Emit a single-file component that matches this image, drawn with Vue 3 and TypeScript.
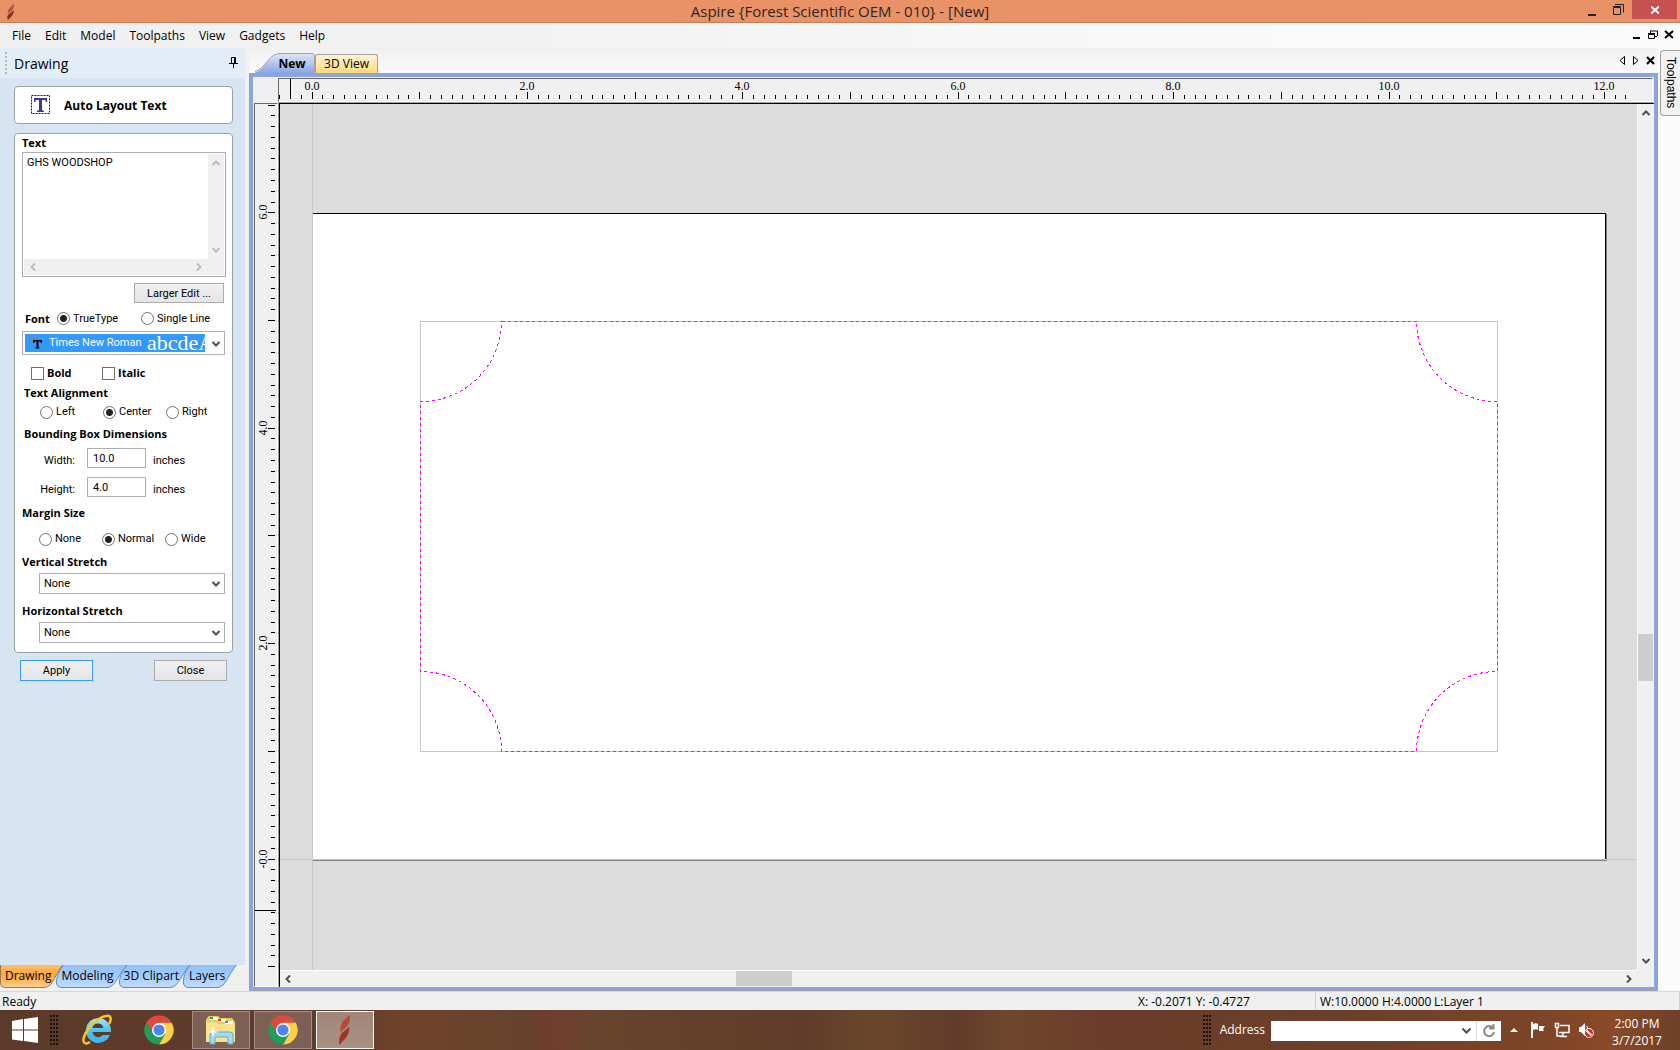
<script setup lang="ts">
import { ref } from 'vue'

interface Tick {
  pos: number
  major: boolean
  label: string
}

const menus = ['File', 'Edit', 'Model', 'Toolpaths', 'View', 'Gadgets', 'Help']
const panelTabs = ['Drawing', 'Modeling', '3D Clipart', 'Layers']
const taskApps = ['chrome', 'files running', 'chrome running', 'aspire running active']

const engraving = ref('GHS WOODSHOP')
const fontKind = ref('TrueType')
const bold = ref(false)
const italic = ref(false)
const alignment = ref('Center')
const margin = ref('Normal')
const boxWidth = ref('10.0')
const boxHeight = ref('4.0')
const address = ref('')

// Screen pixels per inch of material
const INCH = 107.7

function ticks(from: number, to: number, origin: number, dir: number): Tick[] {
  const list: Tick[] = []
  for (let i = from; i <= to; i++) {
    const inches = i / 10
    const even = i % 20 === 0
    list.push({
      pos: Math.floor(origin + dir * inches * INCH),
      major: i % 10 === 0,
      label: even ? inches.toFixed(1) : '',
    })
  }
  return list
}

const hTicks = ticks(-3, 122, 34, 1)
const vTicks = ticks(-10, 70, 757, -1).map((t) => (t.label === '0.0' ? { ...t, label: '-0.0' } : t))

const outline =
  'M221.5 217.5H1136.5A80.5 80.5 0 0 0 1217.5 297.5V567.5A80.5 80.5 0 0 0 1136.5 647.5H221.5A80.5 80.5 0 0 0 140.5 567.5V297.5A80.5 80.5 0 0 0 221.5 217.5Z'
</script>

<template>
  <div class="app">
    <header class="titlebar">
      <svg class="app-icon" width="10" height="18" viewBox="0 0 10 18" aria-hidden="true">
        <path d="M8 1C4 4 1 7 2 11l4-4C8 5 8 3 8 1z" fill="#b4523c" />
        <path d="M8 7L2 12C1 14 1 15 2 17c3-3 6-6 6-10z" fill="#7d2f22" />
      </svg>
      <h1>Aspire {Forest Scientific OEM - 010} - [New]</h1>
      <div class="win-controls">
        <button aria-label="Minimize"><svg width="10" height="12"><path d="M1 10h8v2h-8z" fill="#222" /></svg></button>
        <button aria-label="Restore">
          <svg width="12" height="12" fill="none" stroke="#222"><path d="M1.5 3.5h7v7h-7zM1 2.5h8M3 .5h8.500v8" /></svg>
        </button>
        <button class="close" aria-label="Close">
          <svg width="8" height="8" stroke="#fff" stroke-width="2"><path d="M0 .5l8 7M8 .5l-8 7" /></svg>
        </button>
      </div>
    </header>

    <nav class="menubar">
      <button v-for="m in menus" :key="m">{{ m }}</button>
      <div class="mdi">
        <button aria-label="Minimize document"><svg width="10" height="10"><path d="M1 7h7v2h-7z" /></svg></button>
        <button aria-label="Restore document">
          <svg width="10" height="10" fill="none" stroke="#000"><path d="M.5 4.500h6v4h-6zM0 3.500h7M3 1h6.500v5M2.500 3V.5M9 6.500H7" /></svg>
        </button>
        <button aria-label="Close document">
          <svg width="10" height="10" stroke="#000" stroke-width="2"><path d="M1 1l8 7M9 1l-8 7" /></svg>
        </button>
      </div>
    </nav>

    <main class="workspace">
      <aside class="panel">
        <div class="panel-head">
          <i class="grip"></i>
          <h2>Drawing</h2>
          <svg width="9" height="11" fill="none" stroke="#000" aria-label="Pin"><path d="M2.500 6V.5h4V6M5.500 0v6M0 6.500h9M4.500 6v5" /></svg>
        </div>

        <div class="panel-body">
          <section class="card tool">
            <svg width="20" height="20" viewBox="0 0 20 20" aria-hidden="true">
              <rect x=".5" y=".5" width="18" height="18" fill="#fff" stroke="#15183f" stroke-dasharray="2 1" />
              <path d="M3 3h13v4h-1l-1-2h-3v10l2 1v1H6v-1l2-1V5H5L4 7H3z" fill="#3a3a9c" />
            </svg>
            <h3>Auto Layout Text</h3>
          </section>

          <form class="card form" @submit.prevent>
            <label class="b" for="txt">Text</label>
            <div class="memo">
              <textarea id="txt" v-model="engraving" wrap="off"></textarea>
              <div class="mv">
                <svg width="8" height="7"><path d="M.5 6L4 2.500 7.500 6" class="dim" /></svg>
                <svg width="8" height="7"><path d="M.5 1L4 4.500 7.500 1" class="dim" /></svg>
              </div>
              <div class="mh">
                <svg width="7" height="8"><path d="M6 .5L2.500 4 6 7.500" class="dim" /></svg>
                <svg width="7" height="8"><path d="M1 .5L4.500 4 1 7.500" class="dim" /></svg>
              </div>
              <div class="mc"></div>
            </div>
            <button type="button" class="btn larger">Larger Edit ...</button>

            <div class="row font-row">
              <span class="b">Font</span>
              <label><input v-model="fontKind" type="radio" name="fk" value="TrueType" />TrueType</label>
              <label><input v-model="fontKind" type="radio" name="fk" value="Single Line" />Single Line</label>
            </div>

            <div class="font-box">
              <div class="font-sel">
                <svg width="12" height="12" viewBox="0 0 12 12" aria-hidden="true">
                  <path d="M0 0h8v3H7L6 1.500H5V7H3V1.500H2L1 3H0z" fill="#8a8078" />
                  <path d="M3 3h9v3h-1l-1-1.500H8.500V10l1 .5v1h-4v-1l1-.5V4.500H5L4 6H3z" fill="#000" />
                </svg>
                <select aria-label="Font name"><option>Times New Roman</option></select>
                <span class="sample">abcdeA</span>
              </div>
              <svg class="drop" width="8" height="7"><path d="M.5 1L4 4.500 7.500 1" /></svg>
            </div>

            <div class="row checks">
              <label class="b"><input v-model="bold" type="checkbox" />Bold</label>
              <label class="b"><input v-model="italic" type="checkbox" />Italic</label>
            </div>

            <h4 class="in">Text Alignment</h4>
            <div class="row radios align">
              <label v-for="a in ['Left', 'Center', 'Right']" :key="a">
                <input v-model="alignment" type="radio" name="al" :value="a" />{{ a }}
              </label>
            </div>

            <h4 class="in">Bounding Box Dimensions</h4>
            <div class="row dim-row first">
              <label for="bw">Width:</label><input id="bw" v-model="boxWidth" type="text" /><span>inches</span>
            </div>
            <div class="row dim-row">
              <label for="bh">Height:</label><input id="bh" v-model="boxHeight" type="text" /><span>inches</span>
            </div>

            <h4 class="ms">Margin Size</h4>
            <div class="row radios margins">
              <label v-for="m in ['None', 'Normal', 'Wide']" :key="m">
                <input v-model="margin" type="radio" name="mg" :value="m" />{{ m }}
              </label>
            </div>

            <label class="b stretch" for="vs">Vertical Stretch</label>
            <div class="combo">
              <select id="vs"><option>None</option></select>
              <svg class="drop" width="8" height="7"><path d="M.5 1L4 4.500 7.500 1" /></svg>
            </div>
            <label class="b stretch" for="hs">Horizontal Stretch</label>
            <div class="combo">
              <select id="hs"><option>None</option></select>
              <svg class="drop" width="8" height="7"><path d="M.5 1L4 4.500 7.500 1" /></svg>
            </div>
          </form>

          <div class="actions">
            <button class="btn primary">Apply</button>
            <button class="btn">Close</button>
          </div>
        </div>

        <nav class="panel-tabs">
          <svg class="tab-shapes" width="245" height="24" aria-hidden="true">
            <defs>
              <linearGradient id="tb" x1="0" y1="0" x2="0" y2="1">
                <stop offset="0" stop-color="#8fc0fb" /><stop offset=".45" stop-color="#a3cbfb" /><stop offset="1" stop-color="#bfdcff" />
              </linearGradient>
              <linearGradient id="to" x1="0" y1="0" x2="0" y2="1">
                <stop offset="0" stop-color="#ffc16f" /><stop offset=".45" stop-color="#ffa63a" /><stop offset="1" stop-color="#ffd090" />
              </linearGradient>
            </defs>
            <g fill="url(#tb)" stroke="#5d8ac9">
              <path d="M191 -1C186 4 183 12 183.500 18Q184 22.500 189 22.500H217C226 22.500 228 9 237 -.5" />
              <path d="M128 -1C123 4 119 12 119.500 18Q120 22.500 125 22.500H170C179 22.500 182 7 191 -1" />
              <path d="M64 -1C60 4 56 12 56.500 18Q57 22.500 62 22.500H107C116 22.500 119 7 128 -1" />
            </g>
            <path d="M.5 -1V19Q1 22.500 5 22.500H44C54 22.500 55 7 64 -1" fill="url(#to)" stroke="#9c7a4c" />
          </svg>
          <button v-for="t in panelTabs" :key="t">{{ t }}</button>
        </nav>
      </aside>

      <section class="doc">
        <div class="doc-tabs">
          <button class="tab-new">
            <svg width="62" height="20" aria-hidden="true">
              <defs>
                <linearGradient id="tn" x1="0" y1="0" x2="0" y2="1">
                  <stop offset="0" stop-color="#dfe8f8" /><stop offset="1" stop-color="#8ba5e3" />
                </linearGradient>
              </defs>
              <path d="M0 19.500C9 18 14 .5 25 .5H57Q59.500 .5 59.500 3V20H0z" fill="url(#tn)" />
              <path d="M0 18.500C9 17 14 .5 25 .5H57Q59.500 .5 59.500 3V19" fill="none" stroke="#a0a0a0" />
            </svg>
            <span>New</span>
          </button>
          <button class="tab-3d">3D View</button>
          <div class="doc-nav">
            <button aria-label="Previous tab"><svg width="6" height="10" fill="none" stroke="#000"><path d="M5.500 .5v8L1 4.500z" /></svg></button>
            <button aria-label="Next tab"><svg width="6" height="10" fill="none" stroke="#000"><path d="M.5 .5v8L5 4.500z" /></svg></button>
            <button aria-label="Close tab"><svg width="9" height="9" stroke="#000" stroke-width="2"><path d="M1 1l7 7M8 1l-7 7" /></svg></button>
          </div>
        </div>

        <div class="frame">
          <div class="corner"></div>
          <div class="hruler">
            <svg width="100%" height="23" shape-rendering="crispEdges">
              <rect v-for="t in hTicks" :key="t.pos" :x="t.pos" :y="t.major ? 14 : 17" width="1" :height="t.major ? 7 : 4" />
              <rect x="12" y="1" width="1" height="16" />
              <template v-for="t in hTicks" :key="'l' + t.pos">
                <text v-if="t.label" :x="t.pos" y="12" text-anchor="middle">{{ t.label }}</text>
              </template>
            </svg>
          </div>
          <div class="vruler">
            <svg width="24" height="100%" shape-rendering="crispEdges">
              <rect v-for="t in vTicks" :key="t.pos" :x="t.major ? 14 : 17" :y="t.pos - 1" :width="t.major ? 7 : 4" height="1" />
              <rect x="1" y="807" width="21" height="1" />
              <template v-for="t in vTicks" :key="'l' + t.pos">
                <text
                  v-if="t.label"
                  text-anchor="middle"
                  :transform="`translate(13 ${t.pos - 1}) rotate(-90)`"
                >{{ t.label }}</text>
              </template>
            </svg>
          </div>
          <div class="view">
            <div class="canvas">
              <svg width="100%" height="100%">
                <g shape-rendering="crispEdges">
                  <rect x="32" y="0" width="1" height="100%" fill="#c6c6c6" />
                  <rect x="33" y="109" width="1293" height="646" fill="#fff" />
                  <rect x="33" y="109" width="1293" height="1" />
                  <rect x="1325" y="109" width="1" height="646" />
                  <rect x="1326" y="110" width="1" height="647" fill="#808080" />
                  <rect x="0" y="755" width="100%" height="1" fill="#c6c6c6" />
                  <rect x="33" y="756" width="1294" height="1" fill="#808080" />
                  <rect x="140.5" y="217.5" width="1077" height="430" fill="none" stroke="#c6c6c6" />
                </g>
                <path :d="outline" fill="none" stroke="#f0f" stroke-dasharray="3 3" shape-rendering="crispEdges" />
              </svg>
            </div>
            <div class="vscroll">
              <svg width="8" height="7"><path d="M.5 6L4 2.500 7.500 6" /></svg>
              <i class="before"></i><i class="thumb"></i><i class="after"></i>
              <svg width="8" height="7"><path d="M.5 1L4 4.500 7.500 1" /></svg>
            </div>
            <div class="hscroll">
              <svg width="7" height="8"><path d="M6 .5L2.500 4 6 7.500" /></svg>
              <i class="before"></i><i class="thumb"></i><i class="after"></i>
              <svg width="7" height="8"><path d="M1 .5L4.500 4 1 7.500" /></svg>
            </div>
            <div class="sizer"></div>
          </div>
        </div>
      </section>

      <aside class="dock"><button>Toolpaths</button></aside>
    </main>

    <footer class="status">
      <span class="ready">Ready</span>
      <span class="pos">X: -0.2071 Y: -0.4727</span>
      <span class="size"><span>W:10.0000</span><span>H:4.0000</span><span>L:Layer 1</span></span>
    </footer>

    <div class="taskbar">
      <button class="start" aria-label="Start">
        <svg width="26" height="26" viewBox="0 0 26 26" fill="#fff">
          <path d="M0 4l11-2v10.500H0zM12 2l14-2v12.500H12zM0 13.500h11V24L0 22.500zM12 13.500h14V26l-14-2z" />
        </svg>
      </button>
      <i class="dots"></i>
      <button class="ie" aria-label="Internet Explorer">
        <svg width="32" height="32" viewBox="0 0 32 32">
          <defs>
            <linearGradient id="ieg" x1="0" y1="0" x2="0" y2="1"><stop offset="0" stop-color="#a8ecff" /><stop offset=".5" stop-color="#49c3f2" /><stop offset="1" stop-color="#3fb2ea" /></linearGradient>
          </defs>
          <path d="M17 4a12.500 12.500 0 1 0 12 17h-7a6 6 0 0 1-10.500-3H30A13 13 0 0 0 17 4zm-5.500 10a5.500 5.500 0 0 1 10.800 0z" fill="url(#ieg)" fill-rule="evenodd" />
          <path d="M28 10C31 5 30 1 25 2 17 3 6 14 3 23c-2 6 1 8 6 5" fill="none" stroke="#f6c727" stroke-width="2.500" />
        </svg>
      </button>
      <button v-for="a in taskApps" :key="a" :class="['task', a]" :aria-label="a.split(' ')[0]">
        <svg v-if="a.startsWith('chrome')" width="30" height="30" viewBox="-15 -15 30 30">
          <path d="M-12.700 -7.300A14.600 14.600 0 0 1 12.700 -7.300L0 -7.300L-6.300 3.600z" fill="#dd4b3e" />
          <path d="M12.700 -7.300A14.600 14.600 0 0 1 0 14.600L6.300 3.600L0 -7.300z" fill="#fdd04a" />
          <path d="M0 14.600A14.600 14.600 0 0 1 -12.700 -7.300L-6.300 3.600L6.300 3.600z" fill="#1f9e5a" />
          <circle r="7" fill="#fff" /><circle r="5.600" fill="#4a86ee" />
        </svg>
        <svg v-else-if="a.startsWith('files')" width="32" height="30" viewBox="0 0 32 30">
          <path d="M2 3l2-2h9l2 2h12l3 4v20H1V5z" fill="#eccb63" />
          <path d="M5 2h8v3H5zM13 4h8v3h-8zM20 6h8v3h-8z" fill="#fff" />
          <path d="M5 2h3v2H5z" fill="#18a048" /><path d="M13 4h3v2h-3z" fill="#d63a2a" /><path d="M20 6h3v2h-3z" fill="#2e90e0" />
          <path d="M1 7h10l2 2h17v18H1z" fill="#f8e38d" />
          <path d="M5 29v-9q0-3 3-3h17q3 0 3 3v9h-5v-5q0-2-2-2h-9q-2 0-2 2v5z" fill="#a4d8ee" stroke="#63a9cc" />
          <path d="M8 11l1 5 5 1-5 1-1 5-1-5-5-1 5-1z" fill="#fff" />
        </svg>
        <svg v-else width="14" height="30" viewBox="0 0 14 30">
          <path d="M12 0C5 5 1 10 3 17l6-6C12 8 12 4 12 0z" fill="#b4493a" />
          <path d="M11 12L3 19C1 23 1 26 1 30 6 25 12 20 11 12z" fill="#a03426" />
        </svg>
      </button>

      <div class="tray">
        <i class="dots"></i>
        <label for="addr">Address</label>
        <div class="addr">
          <input id="addr" v-model="address" type="text" />
          <svg width="9" height="8"><path d="M.5 1.500l4 4 4-4" class="go" /></svg>
          <button aria-label="Refresh"><svg width="14" height="14" fill="none" stroke="#8a8a8a" stroke-width="2"><path d="M11 4A5 5 0 1 0 12 8M11.500 0v4.500H7" /></svg></button>
        </div>
        <svg class="up" width="8" height="4"><path d="M0 4l4-4 4 4z" fill="#fff" /></svg>
        <svg class="flag" width="16" height="16" viewBox="0 0 16 16" fill="#fff"><path d="M1 0h2v16H1zM3 2c2-1 4-1 5 0v6C7 7 5 7 3 8zM9 4h6l-2 3 1 2H9z" /></svg>
        <svg class="net" width="16" height="16" fill="none" stroke="#fff" stroke-width="1.500"><path d="M6 3.500h9v7H5M1.500 1.500h3v4h-3zM3 6v8h5M9 11v3M6 14.500h7" /></svg>
        <svg class="vol" width="16" height="16" viewBox="0 0 16 16">
          <path d="M1 5h2l4-4v13l-4-4H1z" fill="#fff" /><path d="M9 4q1 3 0 6" stroke="#fff" fill="none" />
          <circle cx="11" cy="11" r="4.500" fill="#d22" stroke="#fff" /><path d="M8.500 8.500l5 5" stroke="#fff" stroke-width="2" />
        </svg>
        <time>2:00 PM<br />3/7/2017</time>
      </div>
    </div>
  </div>
</template>

<style>
html,
body {
  background: #f0f0f0;
}
body {
  margin: 0;
}
</style>

<style scoped>
* {
  box-sizing: border-box;
}
.app {
  display: flex;
  flex-direction: column;
  min-height: 100vh;
  font: 12px/16px 'Open Sans', 'Noto Sans', sans-serif;
  color: #000;
  background: #f0f0f0;
}
button,
input,
select,
textarea {
  font: inherit;
  color: inherit;
}
button {
  border: 0;
  padding: 0;
  background: none;
}
svg {
  display: block;
  flex: none;
}
h1,
h2,
h3,
h4 {
  margin: 0;
  font-size: inherit;
  line-height: inherit;
}
.titlebar {
  display: grid;
  grid-template-columns: 1fr auto 1fr;
  height: 23px;
  background: #e99267;
  border-bottom: 1px solid #c47c59;
}
.app-icon {
  margin: 3px 6px;
}
.titlebar h1 {
  font-size: 15px;
  line-height: 23px;
  font-weight: 400;
  color: #2f241d;
}
.win-controls {
  display: flex;
  justify-content: flex-end;
  align-items: flex-start;
  padding-right: 3px;
}
.win-controls button {
  display: flex;
  justify-content: center;
  width: 26px;
  padding-top: 4px;
}
.win-controls .close {
  align-items: center;
  width: 45px;
  height: 19px;
  margin-left: 1px;
  padding: 0;
  background: #c75050;
}
.menubar {
  display: flex;
  gap: 14px;
  height: 25px;
  padding: 0 6px 0 12px;
  background: linear-gradient(90deg, #f0f0f0, #f2f2f2 30%, #fbfbfb 85%);
}
.menubar > button {
  padding-top: 1px;
}
.mdi {
  display: flex;
  align-items: center;
  gap: 6px;
  margin-left: auto;
  padding-bottom: 2px;
}
.workspace {
  display: flex;
  flex: 1;
}

/* Drawing panel */
.panel {
  display: flex;
  flex-direction: column;
  width: 245px;
  font-family: Roboto, 'Noto Sans', sans-serif;
  font-size: 11px;
  line-height: 14px;
}
.panel-head {
  display: flex;
  align-items: center;
  height: 30px;
  padding: 0 7px 0 5px;
  background: #e3edf7;
}
.panel-head h2 {
  flex: 1;
  margin-left: 7px;
  padding-top: 2px;
  font-family: 'Open Sans', sans-serif;
  font-size: 14px;
  font-weight: 400;
}
.panel-head svg {
  margin-bottom: 2px;
}
.grip {
  width: 2px;
  height: 22px;
  background: repeating-linear-gradient(#b4b8bd 0 2px, transparent 2px 4px);
}
.panel-body {
  flex: 1;
  padding: 8px 12px 0 14px;
  background: #d7e4f1;
}
.card {
  background: #fff;
  border: 1px solid #a0a0a0;
  border-radius: 4px;
}
.tool {
  display: flex;
  align-items: center;
  gap: 13px;
  height: 38px;
  padding-left: 16px;
  font: 12px/16px 'Open Sans', sans-serif;
}
.tool h3 {
  padding-top: 2px;
}
.form {
  display: flex;
  flex-direction: column;
  height: 520px;
  margin-top: 9px;
  padding: 2px 7px;
}
.b,
h4 {
  font-family: 'Open Sans', sans-serif;
  font-weight: 700;
}
.memo {
  display: grid;
  grid-template-columns: 1fr 16px;
  grid-template-rows: 1fr 16px;
  width: 204px;
  height: 125px;
  margin-top: 2px;
  padding: 1px;
  border: 1px solid #abadb3;
}
.memo textarea {
  resize: none;
  overflow: hidden;
  border: 0;
  outline: 0;
  padding: 2px 3px;
}
.mv,
.mh,
.mc {
  display: flex;
  align-items: center;
  justify-content: space-between;
  background: #f0f0f0;
}
.mv {
  flex-direction: column;
  padding: 5px 0;
}
.mh {
  padding: 0 5px;
}
path.dim {
  stroke: #bcbcbc;
}
.mv path,
.mh path,
.drop path,
.vscroll path,
.hscroll path,
path.go {
  fill: none;
  stroke-width: 2;
}
.drop path,
.vscroll path,
.hscroll path,
path.go {
  stroke: #505050;
}
.btn {
  width: 73px;
  height: 21px;
  padding-top: 1px;
  border: 1px solid #acacac;
  background: linear-gradient(#f0f0f0, #e5e5e5);
}
.larger {
  align-self: flex-end;
  width: 90px;
  height: 20px;
  margin: 6px 1px 0 0;
}
.primary {
  border-color: #3399ff;
}
.row {
  display: flex;
  align-items: center;
}
.row label {
  display: flex;
  flex: none;
  align-items: center;
  gap: 3px;
}
input[type='radio'],
input[type='checkbox'] {
  appearance: none;
  width: 13px;
  height: 13px;
  margin: 0;
  border: 1px solid #707070;
  background: #fff;
}
input[type='radio'] {
  border-radius: 50%;
}
input[type='radio']:checked {
  background: radial-gradient(circle, #222 3px, #fff 4px);
}
.font-row {
  height: 15px;
  margin-top: 8px;
  padding-left: 3px;
}
.font-row .b {
  width: 32px;
}
.font-row label:nth-of-type(1) {
  width: 84px;
}
.font-box,
.combo {
  position: relative;
  border: 1px solid #abadb3;
}
.font-box {
  width: 203px;
  height: 24px;
  margin-top: 5px;
  padding: 2px;
}
.font-sel {
  display: flex;
  align-items: center;
  width: 180px;
  height: 18px;
  overflow: hidden;
  padding-left: 5px;
  background: #3399ff;
  color: #fff;
}
.font-sel select,
.combo select {
  appearance: none;
  border: 0;
  outline: 0;
  background: none;
}
.font-sel select {
  width: 98px;
  margin-left: 7px;
  padding: 0;
  flex: none;
}
.sample {
  font: 22px/18px 'Liberation Serif', serif;
}
.drop {
  position: absolute;
  right: 4px;
  top: 9px;
  pointer-events: none;
}
.checks {
  height: 16px;
  margin-top: 10px;
  padding-left: 9px;
}
.checks label {
  width: 71px;
}
.in {
  margin: 5px 0 0 2px;
}
.radios {
  height: 16px;
  margin-top: 4px;
}
.radios label {
  width: 63px;
}
.align {
  padding-left: 18px;
}
.align + .in {
  margin-top: 7px;
}
.dim-row {
  height: 20px;
  margin-top: 9px;
}
.dim-row.first {
  margin-top: 7px;
}
.dim-row label {
  justify-content: flex-end;
  width: 53px;
  margin-right: 12px;
  padding-top: 5px;
}
.dim-row span {
  margin-left: 7px;
  padding-top: 5px;
}
.dim-row input {
  width: 59px;
  height: 20px;
  padding: 0 5px;
  border: 1px solid #abadb3;
}
.ms {
  margin-top: 9px;
}
.margins {
  margin-top: 11px;
  padding-left: 17px;
}
.stretch {
  margin-top: 8px;
}
.combo {
  width: 186px;
  height: 21px;
  margin: 4px 0 0 17px;
}
.combo + .stretch {
  margin-top: 10px;
}
.combo .drop {
  top: 7px;
}
.combo select {
  width: 100%;
  height: 19px;
  padding: 0 4px;
}
.actions {
  display: flex;
  justify-content: space-between;
  margin: 7px 6px 0;
}
.panel-tabs {
  position: relative;
  display: flex;
  align-items: flex-start;
  gap: 10px;
  height: 26px;
  padding-left: 5px;
  font-family: 'Open Sans', sans-serif;
  font-size: 12px;
}
.panel-tabs button {
  position: relative;
  padding-top: 4px;
}
.tab-shapes {
  position: absolute;
  left: 0;
  top: 0;
}

/* Document window */
.doc {
  display: flex;
  flex: 1;
  flex-direction: column;
  min-width: 0;
  margin-left: 4px;
}
.doc-tabs {
  display: flex;
  align-items: flex-end;
  height: 25px;
  padding-left: 6px;
  background: linear-gradient(#f0f0f0, #fbfbfb);
}
.tab-new {
  position: relative;
  z-index: 1;
  display: grid;
  width: 60px;
  height: 20px;
}
.tab-new svg,
.tab-new span {
  grid-area: 1 / 1;
}
.tab-new span {
  padding: 3px 0 0 12px;
  font-weight: 700;
}
.tab-3d {
  width: 63px;
  height: 19px;
  border: 1px solid #a0a0a0;
  border-bottom: 0;
  border-radius: 3px 3px 0 0;
  background: linear-gradient(#fff4d8, #ffda78);
}
.doc-nav {
  display: flex;
  align-items: center;
  height: 25px;
  margin-left: auto;
  padding-right: 1px;
}
.doc-nav button {
  display: grid;
  place-items: center;
  width: 14px;
}
.frame {
  display: grid;
  flex: 1;
  grid-template-columns: 25px 1fr;
  grid-template-rows: 25px 1fr;
  background: #f0f0f0;
  border: 1px solid #a0a0a0;
  outline: 3px solid #8ba5e3;
  outline-offset: -4px;
  padding: 3px;
}
.hruler {
  margin: 1px 1px 0 0;
  border-top: 1px solid #696969;
  border-left: 1px solid #696969;
  border-right: 1px solid #fff;
  border-bottom: 1px solid #fff;
  overflow: hidden;
}
.hruler svg {
  margin-left: -1px;
  margin-top: -1px;
}
.vruler {
  position: relative;
  margin: 1px 0 0 1px;
  border: 1px solid #fff;
  border-top-color: #696969;
  border-left-color: #696969;
  overflow: hidden;
}
.vruler svg {
  position: absolute;
  left: -1px;
  top: -1px;
}
.hruler text,
.vruler text {
  font: 12px 'Liberation Serif', serif;
}
.view {
  display: grid;
  grid-template-columns: 1fr 17px;
  grid-template-rows: 1fr 17px;
  border-left: 1px solid #000;
  border-top: 1px solid #000;
  margin: 1px 0 0 1px;
  box-shadow: -1px -1px #a0a0a0;
}
.canvas {
  position: relative;
  overflow: hidden;
  background: #dcdcdc;
}
.canvas svg {
  position: absolute;
}
.vscroll,
.hscroll {
  display: flex;
  align-items: center;
}
.vscroll {
  flex-direction: column;
  padding: 5px 1px 5px 0;
  border-left: 1px solid #fff;
}
.hscroll {
  padding: 0 4px 1px;
  border-top: 1px solid #fff;
}
.thumb {
  background: #cdcdcd;
}
.vscroll .thumb {
  width: 15px;
  height: 47px;
}
.hscroll .thumb {
  width: 56px;
  height: 15px;
}
.vscroll .before {
  flex: 518;
}
.vscroll .after {
  flex: 277;
}
.hscroll .before {
  flex: 445;
}
.hscroll .after {
  flex: 834;
}
.dock {
  width: 22px;
  padding: 2px 0 0 2px;
  background: #fbfbfb;
}
.dock button {
  width: 20px;
  height: 66px;
  border: 1px solid #a0a0a0;
  border-right: 0;
  border-radius: 4px 0 0 4px;
  background: #f2f2f2;
  writing-mode: vertical-rl;
  font: 12px/18px 'Liberation Sans', sans-serif;
}

.status {
  display: flex;
  height: 19px;
  border-top: 1px solid #d7d7d7;
  line-height: 19px;
}
.ready {
  flex: 1;
  padding-left: 2px;
}
.pos {
  width: 177px;
}
.size {
  display: flex;
  width: 365px;
  padding-left: 4px;
  border-left: 1px solid #d0d0d0;
  border-right: 1px solid #d0d0d0;
}
.size span {
  width: 52px;
}
.size span:first-child {
  width: 62px;
}

/* Windows taskbar */
.taskbar {
  display: flex;
  align-items: center;
  height: 40px;
  color: #fff;
  background: linear-gradient(90deg, #5c3a2a 0, #5f3c2b 20%, #6f432b 24%, #66422c 31%, #713d2c 33%, #67442c 35%, #5f3d2a 48%, #69472c 52%, #623c2a 57%, #6d472d 60%, #6b3c2a 66%, #6a4029 80%, #7e4527 92%, #8a4a27 96%, #6c4029);
}
.taskbar button {
  display: grid;
  place-items: center;
}
.start {
  width: 50px;
}
.dots {
  width: 8px;
  height: 30px;
  background: radial-gradient(circle at 1px 1px, #1c100b 1px, transparent 1px) 0 0 / 3px 4px;
}
.ie {
  width: 58px;
  margin-left: 10px;
}
.task {
  width: 58px;
  height: 38px;
  margin-left: 4px;
}
.running {
  border: 1px solid #a58d82;
  background: #7d6055;
}
.taskbar .active {
  border-color: #fff;
  background: linear-gradient(#a08678, #ab9184);
}
.tray {
  display: flex;
  align-items: center;
  margin-left: auto;
}
.tray .dots {
  margin-right: 3px;
}
.tray label {
  margin: 0 6px;
}
.addr {
  display: flex;
  align-items: center;
  width: 230px;
  height: 20px;
  margin: 2px 9px 0 0;
  background: #fff;
}
.addr input {
  flex: 1;
  min-width: 0;
  height: 20px;
  border: 0;
  outline: 0;
  background: none;
  color: #000;
}
.addr button {
  width: 25px;
  height: 20px;
  margin-left: 5px;
  border-left: 1px solid #d9d9d9;
}
.flag {
  margin-left: 12px;
}
.net,
.vol {
  margin-left: 8px;
}
.tray time {
  width: 86px;
  padding-top: 3px;
  line-height: 17px;
  text-align: center;
}
</style>
